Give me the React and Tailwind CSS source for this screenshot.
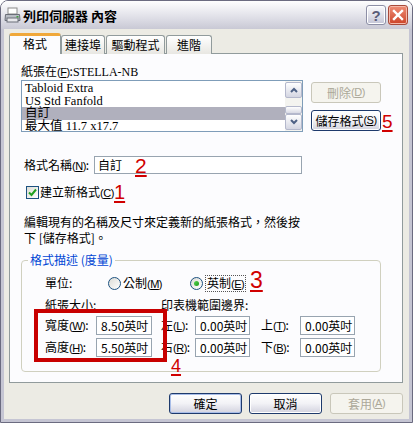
import React from "react";

const cjk = "font-['Noto_Sans_CJK_TC','Noto_Sans',sans-serif]";

// access-key suffix such as (F), kept narrow like the bitmap font
function K({ k }) {
  return (
    <span className="font-['Liberation_Sans',sans-serif] text-[11px] tracking-[-0.5px]">
      (<span className="underline underline-offset-[1px]">{k}</span>)
    </span>
  );
}

function Field({ value, w }) {
  return (
    <div className={`${w} h-[19px] border border-[#98a4b0] bg-white pl-[4px] text-[12px] leading-[17px] text-black`}>
      {value}
    </div>
  );
}

function Radio({ checked }) {
  return (
    <span className="flex h-[13px] w-[13px] items-center justify-center rounded-full border border-[#1c5180] bg-gradient-to-br from-[#dcdcd6] to-white">
      {checked && <span className="h-[5px] w-[5px] rounded-full bg-gradient-to-br from-[#55d451] to-[#1a9a16]" />}
    </span>
  );
}

function XpButton({ children, w, disabled, primary }) {
  if (disabled) {
    return (
      <div className={`${w} flex h-[21px] items-center justify-center rounded-[3px] border border-[#c9c7ba] bg-[#f5f4ee] text-[12px] text-[#aca899]`}>
        {children}
      </div>
    );
  }
  return (
    <div
      className={`${w} flex h-[21px] items-center justify-center rounded-[3px] border border-[#1e3a6c] bg-gradient-to-b from-white via-[#f2f2f6] to-[#d2d2de] text-[12px] text-black ${
        primary ? "shadow-[inset_0_0_0_1px_#a8bde8]" : "shadow-[inset_0_0_0_1px_#ffffff]"
      }`}
    >
      {children}
    </div>
  );
}

function Mark({ n, cls }) {
  return (
    <span className={`absolute font-['Liberation_Sans',sans-serif] leading-none text-[#d00000] underline decoration-[2px] underline-offset-[2px] ${cls}`}>
      {n}
    </span>
  );
}

export default function App() {
  return (
    <div className={`relative h-[423px] w-[413px] bg-white ${cjk} text-[12px] text-black`}>
      <div className="flex h-full flex-col overflow-hidden rounded-t-[8px] border border-[#6b6b80]">
        {/* title bar */}
        <div className="flex h-[28px] items-center bg-gradient-to-b from-[#fefefe] via-[#e4e4eb] to-[#c9c9d5] pl-[3px] pr-[4px]">
          <svg width="17" height="17" viewBox="0 0 17 17">
            <rect x="4" y="1" width="9" height="6" fill="#fff" stroke="#8a8a8a" />
            <path d="M1.5 7.5 L15.5 7.5 L16 13.5 L1 13.5 Z" fill="#b8bcc4" stroke="#6a6e78" />
            <rect x="3" y="11" width="11" height="4" fill="#e8e8ec" stroke="#6a6e78" />
            <rect x="12.5" y="9" width="2" height="1.5" fill="#40a040" />
          </svg>
          <span className="ml-[2px] text-[13px] font-bold leading-none">列印伺服器 內容</span>
          <div className="ml-auto flex gap-[2px]">
            <div className="flex h-[20px] w-[20px] items-center justify-center rounded-[3px] border border-[#8d8fa6] bg-gradient-to-b from-[#fbfbfd] to-[#c4c5d6] shadow-[inset_0_0_0_1px_#ffffff]">
              <span className="font-['Liberation_Sans',sans-serif] text-[15px] font-bold leading-none text-[#5a5c78]">?</span>
            </div>
            <div className="flex h-[20px] w-[20px] items-center justify-center rounded-[3px] border border-[#a84a3a] bg-gradient-to-b from-[#ee8d76] to-[#cc4226] shadow-[inset_0_0_0_1px_#f6b8a8]">
              <svg width="12" height="12" viewBox="0 0 12 12">
                <path d="M2 2 L10 10 M10 2 L2 10" stroke="#fff" strokeWidth="2.4" strokeLinecap="square" />
              </svg>
            </div>
          </div>
        </div>

        {/* body */}
        <div className="flex flex-1 flex-col border-x-[3px] border-b-[3px] border-[#c5c5d3] bg-[#ecebe4] pl-[5px] pr-[6px] pt-[4px]">
          {/* tabs */}
          <div className="relative z-10 -mb-px flex h-[21px] items-end">
            <div className="flex h-[21px] w-[52px] items-start justify-center rounded-t-[3px] border border-b-0 border-[#919b9c] border-t-[3px] border-t-[#f0a83a] bg-[#fcfcfe] pt-[1px] leading-[14px]">
              格式
            </div>
            <div className="flex h-[19px] w-[44px] items-center justify-center rounded-t-[3px] border border-b-0 border-[#919b9c] bg-gradient-to-b from-white to-[#e8e7e2] leading-[14px]">
              連接埠
            </div>
            <div className="ml-px flex h-[19px] w-[59px] items-center justify-center rounded-t-[3px] border border-b-0 border-[#919b9c] bg-gradient-to-b from-white to-[#e8e7e2] leading-[14px]">
              驅動程式
            </div>
            <div className="ml-px flex h-[19px] w-[46px] items-center justify-center rounded-t-[3px] border border-b-0 border-[#919b9c] bg-gradient-to-b from-white to-[#e8e7e2] leading-[14px]">
              進階
            </div>
          </div>

          {/* panel */}
          <div className="h-[330px] border border-[#919b9c] bg-[#fcfcfe] pl-[11px]">
            <div className="mt-[10px] h-[14px] leading-[14px]">
              紙張在<K k="F" />:<span className="font-['Liberation_Serif',serif]">STELLA-NB</span>
            </div>

            <div className="mt-[2px] flex">
              <div className="flex h-[52px] w-[282px] border border-[#7f9db9] bg-white">
                <div className="flex-1 pt-px font-['Liberation_Serif','Noto_Sans_CJK_TC',serif] text-[12.5px] leading-[12.5px]">
                  <div className="pl-[3px]">Tabloid Extra</div>
                  <div className="pl-[3px]">US Std Fanfold</div>
                  <div className="bg-[#b0b0bd] pl-[3px]">自訂</div>
                  <div className="pl-[3px]">最大值 11.7 x17.7</div>
                </div>
                <div className="flex w-[17px] flex-col bg-[#f4f4f0] py-px">
                  <div className="flex h-[16px] items-center justify-center rounded-[2px] border border-[#b4b8cc] bg-gradient-to-b from-white to-[#d4d6e2]">
                    <svg width="8" height="6" viewBox="0 0 8 6"><path d="M1 5 L4 2 L7 5" fill="none" stroke="#4d6185" strokeWidth="2" /></svg>
                  </div>
                  <div className="mt-[8px] h-[9px] rounded-[2px] border border-[#b4b8cc] bg-gradient-to-b from-white to-[#d8d9e4]" />
                  <div className="mt-auto flex h-[16px] items-center justify-center rounded-[2px] border border-[#b4b8cc] bg-gradient-to-b from-white to-[#d4d6e2]">
                    <svg width="8" height="6" viewBox="0 0 8 6"><path d="M1 1 L4 4 L7 1" fill="none" stroke="#4d6185" strokeWidth="2" /></svg>
                  </div>
                </div>
              </div>
              <div className="ml-[8px] flex flex-col">
                <div className="mt-[2px]">
                  <XpButton w="w-[70px]" disabled>
                    刪除<K k="D" />
                  </XpButton>
                </div>
                <div className="mt-[7px]">
                  <XpButton w="w-[70px]">
                    儲存格式<K k="S" />
                  </XpButton>
                </div>
              </div>
            </div>

            <div className="mt-[24px] flex h-[18px] items-center">
              <div className="w-[73px] pl-[3px]">
                格式名稱<K k="N" />:
              </div>
              <div className="h-[18px] w-[208px] border border-[#98a4b0] bg-white pl-[3px] leading-[16px]">自訂</div>
            </div>

            <div className="mt-[12px] flex h-[13px] items-center pl-[5px]">
              <span className="flex h-[13px] w-[13px] items-center justify-center border border-[#1c5180] bg-gradient-to-br from-[#dcdcd6] to-white">
                <svg width="9" height="9" viewBox="0 0 9 9">
                  <path d="M1 4.5 L3.5 7 L8 1.5" fill="none" stroke="#21a121" strokeWidth="2" />
                </svg>
              </span>
              <span className="ml-[1px] leading-[14px]">
                建立新格式<K k="C" />
              </span>
            </div>

            <div className="mt-[15px] pl-[3px] leading-[16px]">
              編輯現有的名稱及尺寸來定義新的紙張格式，然後按
              <br />
              下 [儲存格式]。
            </div>

            <fieldset className="mt-[7px] h-[119px] w-[360px] rounded-[4px] border border-[#d0d0bf]">
              <legend className="ml-[6px] px-[2px] leading-[14px] text-[#0046d5]">格式描述 (度量)</legend>
              <div className="mt-[8px] flex h-[16px] items-center pl-[23px]">
                <span className="w-[63px]">單位:</span>
                <Radio />
                <span className="ml-[2px] w-[67px]">
                  公制<K k="M" />
                </span>
                <Radio checked />
                <span className="ml-[2px] border border-dotted border-[#555] px-px leading-[13px]">
                  英制<K k="E" />
                </span>
              </div>
              <div className="mt-[6px] flex h-[16px] items-center pl-[23px]">
                <span className="w-[116px]">紙張大小:</span>
                <span>印表機範圍邊界:</span>
              </div>
              <div className="mt-[3px] flex items-center pl-[23px]">
                <span className="w-[51px]">
                  寬度<K k="W" />:
                </span>
                <Field value="8.50英吋" w="w-[56px]" />
                <span className="ml-[9px] w-[34px]">
                  左<K k="L" />:
                </span>
                <Field value="0.00英吋" w="w-[55px]" />
                <span className="ml-[11px] w-[39px]">
                  上<K k="T" />:
                </span>
                <Field value="0.00英吋" w="w-[55px]" />
              </div>
              <div className="mt-[3px] flex items-center pl-[23px]">
                <span className="w-[51px]">
                  高度<K k="H" />:
                </span>
                <Field value="5.50英吋" w="w-[56px]" />
                <span className="ml-[9px] w-[34px]">
                  右<K k="R" />:
                </span>
                <Field value="0.00英吋" w="w-[55px]" />
                <span className="ml-[11px] w-[39px]">
                  下<K k="B" />:
                </span>
                <Field value="0.00英吋" w="w-[55px]" />
              </div>
            </fieldset>
          </div>

          {/* bottom buttons */}
          <div className="mt-[10px] flex justify-end">
            <XpButton w="w-[73px]" primary>
              確定
            </XpButton>
            <div className="ml-[7px]">
              <XpButton w="w-[73px]">取消</XpButton>
            </div>
            <div className="ml-[8px]">
              <XpButton w="w-[73px]" disabled>
                套用<K k="A" />
              </XpButton>
            </div>
          </div>
        </div>
      </div>

      {/* annotations */}
      <div className="absolute left-[34px] top-[309px] h-[53px] w-[133px] border-[4px] border-[#c80000]" />
      <Mark n="5" cls="left-[382px] top-[112px] text-[19px]" />
      <Mark n="2" cls="left-[135px] top-[155px] text-[21px]" />
      <Mark n="1" cls="left-[114px] top-[182px] text-[20px]" />
      <Mark n="3" cls="left-[250px] top-[269px] text-[23px]" />
      <Mark n="4" cls="left-[171px] top-[357px] text-[18px]" />
    </div>
  );
}
